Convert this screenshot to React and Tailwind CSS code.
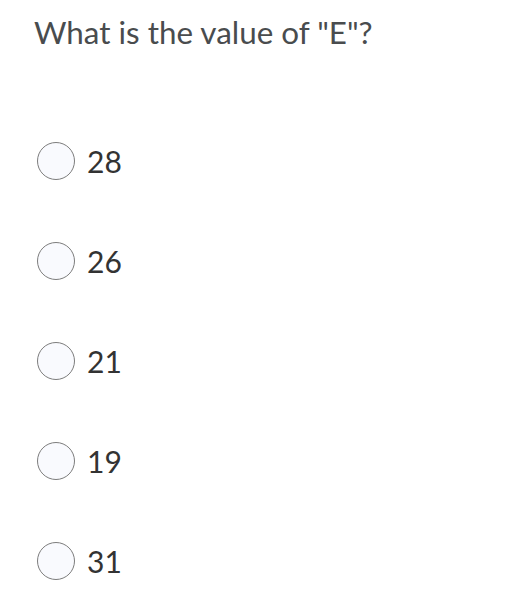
export default function App() {
  const opts = ["28", "26", "21", "19", "31"];
  return (
    <div className="w-[522px] h-[608px] bg-white font-['Lato',sans-serif] text-[#494c4e]">
      <div className="pl-[34px] pt-[12px] text-[31.4px] leading-[40px]">What is the value of "E"?</div>
      <div className="flex flex-col pt-[90px] pl-[37px] gap-[62px]">
        {opts.map((o) => (
          <div key={o} className="flex items-center h-[38px]">
            <div className="w-[38px] h-[38px] rounded-full border border-[#7c7c7c] bg-[#f9fafe]" />
            <span className="ml-[12px] text-[30px] leading-[38px] text-[#333]">{o}</span>
          </div>
        ))}
      </div>
    </div>
  );
}
